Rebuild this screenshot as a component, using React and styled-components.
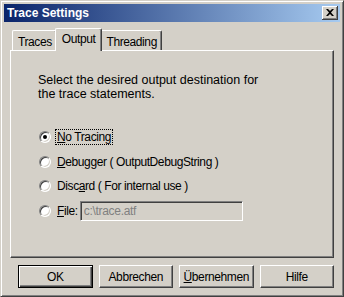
import React, { useState } from "react";
import styled, { createGlobalStyle } from "styled-components";

const Global = createGlobalStyle`
  html, body { margin: 0; padding: 0; background: #d4d0c8; }
  body { font-family: "Liberation Sans", Arial, sans-serif; font-size: 11px; color: #000; }
`;

const OPTIONS = [
  { key: "none", label: "No Tracing", ul: 0 },
  { key: "dbg", label: "Debugger ( OutputDebugString )", ul: 0 },
  { key: "discard", label: "Discard ( For internal use )", ul: 4 },
  { key: "file", label: "File:", ul: 0 },
];

export default function App() {
  const [sel, setSel] = useState("none");
  const [tab, setTab] = useState(1);

  return (
    <>
      <Global />
      <Window>
        <TitleBar>
          <span>Trace Settings</span>
          <CloseBtn>
            <svg width="8" height="7" viewBox="0 0 8 7">
              <path d="M0 0h2l2 2 2-2h2L5 3.5 8 7H6L4 5 2 7H0l3-3.5z" fill="#000" />
            </svg>
          </CloseBtn>
        </TitleBar>
        <Body>
          <Tabs>
            {["Traces", "Output", "Threading"].map((t, i) => (
              <Tab key={t} $active={tab === i} onClick={() => setTab(i)}>
                {t}
              </Tab>
            ))}
          </Tabs>
          <Panel>
            <Intro>
              Select the desired output destination for
              <br />
              the trace statements.
            </Intro>
            <Options>
              {OPTIONS.map((o) => (
                <OptionRow key={o.key} onClick={() => setSel(o.key)}>
                  <Radio $checked={sel === o.key} />
                  <Label $focus={o.key === "none"}>
                    {o.label.slice(0, o.ul)}
                    <u>{o.label[o.ul]}</u>
                    {o.label.slice(o.ul + 1)}
                  </Label>
                  {o.key === "file" && <FileInput disabled value="c:\trace.atf" readOnly />}
                </OptionRow>
              ))}
            </Options>
          </Panel>
          <Buttons>
            <Button $default>OK</Button>
            <Button>Abbrechen</Button>
            <Button>
              <u>Ü</u>bernehmen
            </Button>
            <Button>Hilfe</Button>
          </Buttons>
        </Body>
      </Window>
    </>
  );
}

const Window = styled.div`
  width: 344px;
  height: 297px;
  box-sizing: border-box;
  background: #d4d0c8;
  border-top: 1px solid #d4d0c8;
  border-left: 1px solid #d4d0c8;
  border-right: 1px solid #404040;
  border-bottom: 1px solid #404040;
  box-shadow: inset 1px 1px #fff, inset -1px -1px #808080;
  padding: 3px;
  display: flex;
  flex-direction: column;
`;

const TitleBar = styled.div`
  height: 18px;
  background: linear-gradient(to right, #0a246a, #a6caf0);
  color: #fff;
  font-family: "Liberation Sans", Arial, sans-serif;
  font-weight: bold;
  font-size: 12px;
  display: flex;
  align-items: center;
  justify-content: space-between;
  padding: 0 2px 0 3px;
`;

const CloseBtn = styled.div`
  width: 16px;
  height: 14px;
  box-sizing: border-box;
  background: #d4d0c8;
  border-right: 1px solid #404040;
  border-bottom: 1px solid #404040;
  box-shadow: inset 1px 1px #fff, inset -1px -1px #808080;
  display: flex;
  align-items: center;
  justify-content: center;
`;

const Body = styled.div`
  flex: 1;
  display: flex;
  flex-direction: column;
  padding: 6px 6px 0 6px;
`;

const Tabs = styled.div`
  display: flex;
  align-items: flex-end;
  height: 22px;
  padding-left: 2px;
`;

const Tab = styled.div`
  position: relative;
  height: ${(p) => (p.$active ? 23 : 20)}px;
  box-sizing: border-box;
  padding: ${(p) => (p.$active ? "3px 6px 0" : "4px 4px 0 5px")};
  margin: ${(p) => (p.$active ? "0 -2px -1px" : "0")};
  z-index: ${(p) => (p.$active ? 2 : 1)};
  background: #d4d0c8;
  border-top: 1px solid #fff;
  border-left: 1px solid #fff;
  border-right: 1px solid #404040;
  border-top-left-radius: 2px;
  border-top-right-radius: 2px;
  box-shadow: inset -1px 0 #808080;
  font-size: 12px;
  letter-spacing: -0.4px;
  line-height: 14px;
  cursor: default;
`;

const Panel = styled.div`
  height: 208px;
  box-sizing: border-box;
  border-top: 1px solid #fff;
  border-left: 1px solid #fff;
  border-right: 1px solid #404040;
  border-bottom: 1px solid #404040;
  box-shadow: inset -1px -1px #808080;
  padding: 22px 0 0 27px;
`;

const Intro = styled.div`
  font-size: 12.5px;
  line-height: 14px;
`;

const Options = styled.div`
  margin-top: 29px;
  display: flex;
  flex-direction: column;
  gap: 10.6px;
`;

const OptionRow = styled.div`
  display: flex;
  align-items: center;
  height: 14px;
  margin-left: 1px;
`;

const Radio = styled.span`
  width: 12px;
  height: 12px;
  box-sizing: border-box;
  border-radius: 50%;
  background: #fff;
  border: 1px solid;
  border-color: #808080 #fff #fff #808080;
  box-shadow: inset 1px 1px #404040, inset -1px -1px #d4d0c8;
  position: relative;
  flex: none;
  &::after {
    content: "";
    display: ${(p) => (p.$checked ? "block" : "none")};
    position: absolute;
    left: 3px;
    top: 3px;
    width: 4px;
    height: 4px;
    border-radius: 50%;
    background: #000;
  }
`;

const Label = styled.span`
  margin-left: 5px;
  font-size: 12px;
  letter-spacing: -0.4px;
  padding: 0 1px;
  outline: ${(p) => (p.$focus ? "1px dotted #000" : "none")};
`;

const FileInput = styled.input`
  margin-left: 1px;
  width: 163px;
  height: 20px;
  box-sizing: border-box;
  background: #d4d0c8;
  border: 1px solid;
  border-color: #808080 #fff #fff #808080;
  box-shadow: inset 1px 1px #404040, inset -1px -1px #d4d0c8;
  font-family: "Liberation Sans", Arial, sans-serif;
  font-size: 12px;
  letter-spacing: -0.3px;
  color: #808080;
  padding: 0 3px;
  outline: none;
`;

const Buttons = styled.div`
  display: flex;
  gap: 6px;
  padding: 7px 0 0 8px;
`;

const Button = styled.button`
  width: 75px;
  height: 23px;
  box-sizing: border-box;
  background: #d4d0c8;
  font-family: "Liberation Sans", Arial, sans-serif;
  font-size: 12px;
  letter-spacing: -0.4px;
  color: #000;
  padding: 0;
  border: 1px solid;
  border-color: ${(p) => (p.$default ? "#000" : "#fff #404040 #404040 #fff")};
  box-shadow: ${(p) =>
    p.$default
      ? "inset 1px 1px #fff, inset -1px -1px #404040, inset -2px -2px #808080"
      : "inset -1px -1px #808080"};
`;
